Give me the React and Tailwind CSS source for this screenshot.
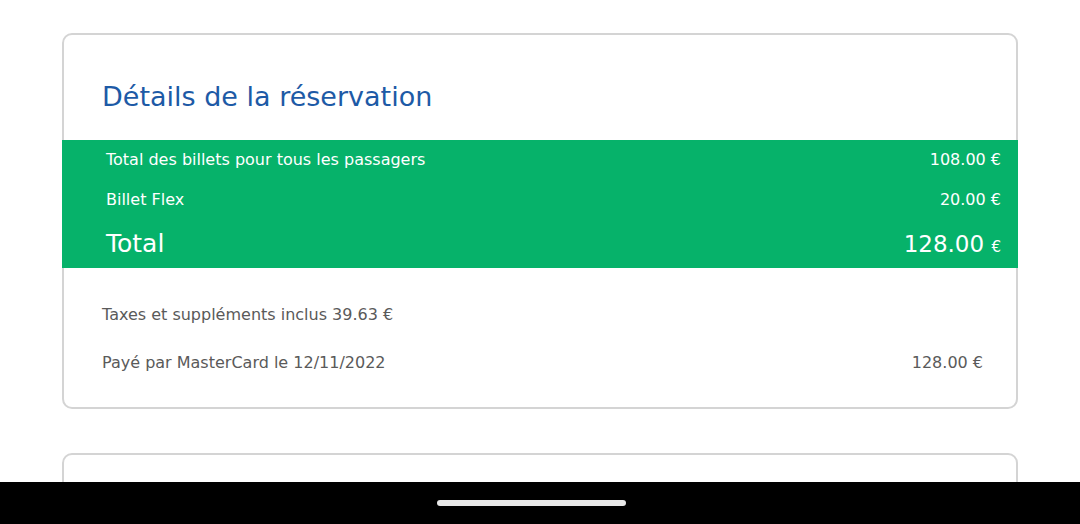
import React from 'react';

const lines = [
  { label: 'Total des billets pour tous les passagers', amount: '108.00' },
  { label: 'Billet Flex', amount: '20.00' },
];

function PriceBand() {
  return (
    <div className="-mx-[2px] bg-[#06b26a] text-white pl-[44px] pr-[17px]">
      {lines.map((line) => (
        <div key={line.label} className="flex items-center justify-between h-[40px] text-[16px]">
          <span>{line.label}</span>
          <span>{line.amount} €</span>
        </div>
      ))}
      <div className="flex items-center justify-between h-[48px]">
        <span className="text-[25px]">Total</span>
        <span className="text-[23px]">
          128.00 <span className="text-[15px]">€</span>
        </span>
      </div>
    </div>
  );
}

export default function App() {
  return (
    <div className="w-[1080px] h-[524px] bg-white overflow-hidden flex flex-col font-['DejaVu_Sans',sans-serif]">
      <div className="flex-1 min-h-0 overflow-hidden px-[62px] pt-[33px]">
        <div className="border-2 border-[#d4d4d4] rounded-[10px] bg-white">
          <h2 className="pl-[38px] pt-[44px] pb-[25px] text-[27px] leading-[36px] text-[#1d5aa6]">
            Détails de la réservation
          </h2>
          <PriceBand />
          <div className="pl-[38px] pr-[33px] pt-[23px] pb-[20px] text-[16px] text-[#5a5a5a]">
            <div className="h-[48px] flex items-center">Taxes et suppléments inclus 39.63 €</div>
            <div className="h-[48px] flex items-center justify-between">
              <span>Payé par MasterCard le 12/11/2022</span>
              <span>128.00 €</span>
            </div>
          </div>
        </div>
        <div className="mt-[44px] h-[60px] border-2 border-[#d4d4d4] rounded-[10px]" />
      </div>
      <div className="h-[42px] bg-black flex items-center pl-[437px] shrink-0">
        <div className="w-[189px] h-[6px] rounded-full bg-[#e8e8e8]" />
      </div>
    </div>
  );
}
